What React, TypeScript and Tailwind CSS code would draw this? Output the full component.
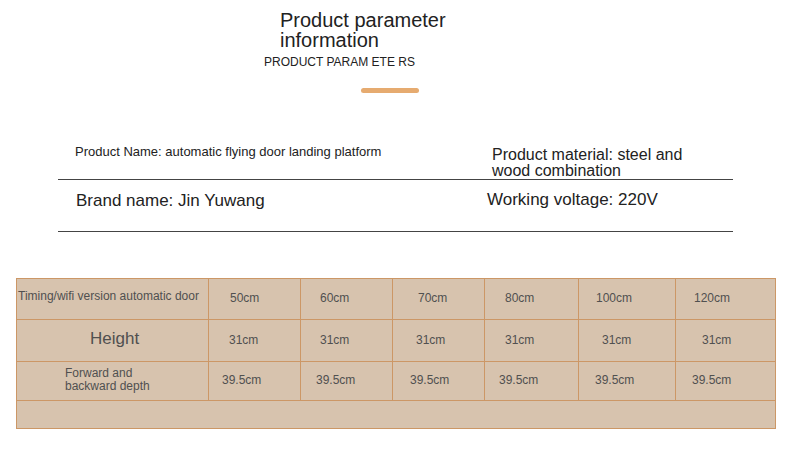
import React from "react";

const cols = [
  { w: "w-[192px]" },
  { w: "w-[92px]" },
  { w: "w-[92px]" },
  { w: "w-[92px]" },
  { w: "w-[94px]" },
  { w: "w-[97px]" },
  { w: "flex-1" },
];

const row1 = [
  { t: "50cm", c: "pl-[21px]" },
  { t: "60cm", c: "pl-[19px]" },
  { t: "70cm", c: "pl-[25px]" },
  { t: "80cm", c: "pl-[20px]" },
  { t: "100cm", c: "pl-[17px]" },
  { t: "120cm", c: "pl-[18px]" },
];
const row2 = [
  { t: "31cm", c: "pl-[20px]" },
  { t: "31cm", c: "pl-[19px]" },
  { t: "31cm", c: "pl-[23px]" },
  { t: "31cm", c: "pl-[20px]" },
  { t: "31cm", c: "pl-[23px]" },
  { t: "31cm", c: "pl-[26px]" },
];
const row3 = [
  { t: "39.5cm", c: "pl-[13px]" },
  { t: "39.5cm", c: "pl-[15px]" },
  { t: "39.5cm", c: "pl-[17px]" },
  { t: "39.5cm", c: "pl-[14px]" },
  { t: "39.5cm", c: "pl-[16px]" },
  { t: "39.5cm", c: "pl-[16px]" },
];

function Row({
  first,
  cells,
  h,
}: {
  first: React.ReactNode;
  cells: { t: string; c: string }[];
  h: string;
}) {
  return (
    <div className={`flex ${h} border-b border-[#cc9766]`}>
      <div className={`${cols[0].w} shrink-0 border-r border-[#cc9766] flex items-center`}>{first}</div>
      {cells.map((cell, i) => (
        <div
          key={i}
          className={`${cols[i + 1].w} shrink-0 ${i < 5 ? "border-r border-[#cc9766]" : ""} flex items-center ${cell.c} text-[12px] text-[#505050] pb-[2px]`}
        >
          {cell.t}
        </div>
      ))}
    </div>
  );
}

export default function App() {
  return (
    <div
      className="w-[790px] h-[459px] bg-white relative overflow-hidden"
      style={{ fontFamily: '"Liberation Sans", Arial, sans-serif' }}
    >
      {/* header */}
      <div className="pt-[10px] pl-[264px]">
        <div className="pl-[16px] w-[200px] text-[20px] leading-[20px] text-[#222]">
          Product parameter information
        </div>
        <div className="mt-[5px] text-[12px] leading-[14px] text-[#222]">PRODUCT PARAM ETE RS</div>
        <div className="ml-[97px] mt-[19px] w-[58px] h-[5px] rounded-full bg-[#e6ab70]" />
      </div>

      {/* info */}
      <div className="mt-[45px] ml-[58px] w-[675px]">
        <div className="flex h-[42px] border-b border-[#444]">
          <div className="w-[429px] pl-[17px] pt-[7px] text-[13px] leading-[14px] text-[#222]">
            Product Name: automatic flying door landing platform
          </div>
          <div className="pl-[5px] pt-[9px] w-[230px] text-[16px] leading-[16px] text-[#222]">
            Product material: steel and wood combination
          </div>
        </div>
        <div className="flex h-[52px] border-b border-[#444]">
          <div className="w-[429px] pl-[18px] pt-[12px] text-[17px] leading-[18px] text-[#222]">
            Brand name: Jin Yuwang
          </div>
          <div className="pt-[11px] text-[17px] leading-[18px] text-[#222]">Working voltage: 220V</div>
        </div>
      </div>

      {/* table */}
      <div className="absolute left-[16px] top-[278px] w-[760px] border border-[#cc9766] bg-[#d7c3ae]">
        <Row
          h="h-[41px]"
          cells={row1}
          first={<span className="pl-[1px] pb-[6px] text-[12px] text-[#505050]">Timing/wifi version automatic door</span>}
        />
        <Row
          h="h-[42px]"
          cells={row2}
          first={<span className="pl-[73px] pb-[4px] text-[17px] text-[#505050]">Height</span>}
        />
        <Row
          h="h-[39px]"
          cells={row3}
          first={
            <span className="pl-[48px] pb-[2px] text-[12px] leading-[13px] text-[#505050]">
              Forward and
              <br />
              backward depth
            </span>
          }
        />
        <div className="h-[27px]" />
      </div>
    </div>
  );
}
